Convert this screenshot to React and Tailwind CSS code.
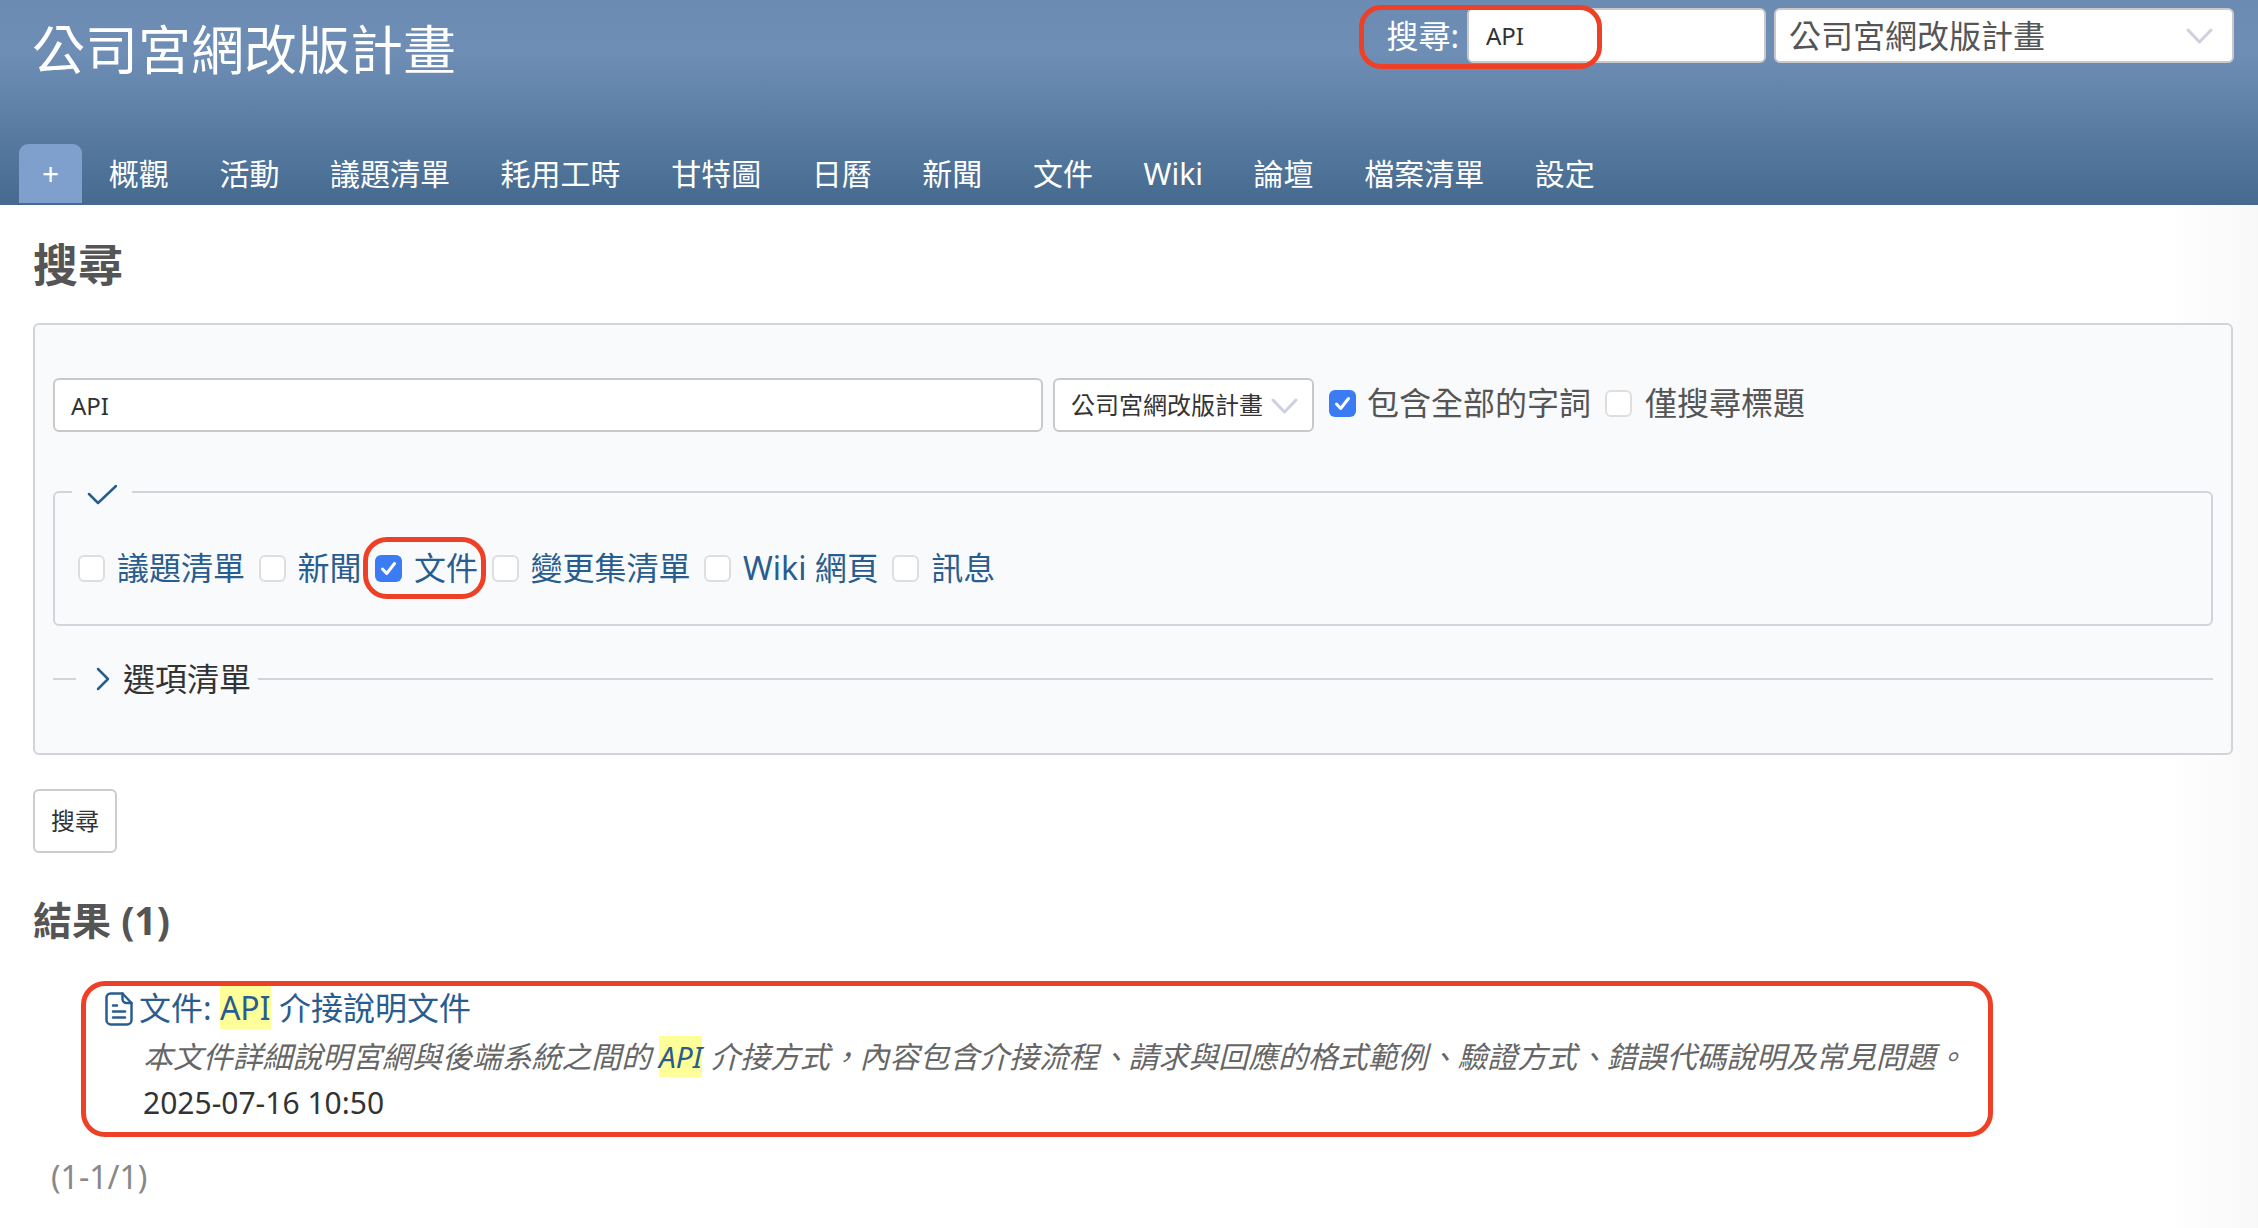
const NAV = ['概觀', '活動', '議題清單', '耗用工時', '甘特圖', '日曆', '新聞', '文件', 'Wiki', '論壇', '檔案清單', '設定']

const TRACKERS = [
  { label: '議題清單' },
  { label: '新聞' },
  { label: '文件', checked: true, marked: true },
  { label: '變更集清單' },
  { label: 'Wiki 網頁' },
  { label: '訊息' },
]

function Checkbox({ checked }) {
  if (checked) {
    return (
      <span className="flex h-[27px] w-[27px] shrink-0 items-center justify-center rounded-[6px] bg-[#3b7cf4]">
        <svg width="21" height="21" viewBox="0 0 21 21" fill="none" stroke="#fff" strokeWidth="3" strokeLinecap="round" strokeLinejoin="round">
          <path d="M4.5 11l4.2 4.5 7.8-10" />
        </svg>
      </span>
    )
  }
  return <span className="h-[27px] w-[27px] shrink-0 rounded-[6px] border-2 border-[#dedede] bg-white" />
}

function Chevron({ className }) {
  return (
    <svg className={className} width="27" height="16" viewBox="0 0 27 16" fill="none" stroke="#cfcfe2" strokeWidth="3" strokeLinecap="round" strokeLinejoin="round">
      <path d="M2 2l11.500 12L25 2" />
    </svg>
  )
}

function DocIcon() {
  return (
    <svg className="mr-[6px] shrink-0" width="28" height="34" viewBox="0 0 28 34" fill="none" stroke="#2a5d8f" strokeWidth="2.500" strokeLinecap="round" strokeLinejoin="round">
      <path d="M5.500 1.500H17.500L26.500 11V28A4.500 4.500 0 0 1 22 32.500H6A4.500 4.500 0 0 1 1.500 28V5.500A4 4 0 0 1 5.500 1.500Z" />
      <path d="M17.500 1.500V7A4 4 0 0 0 21.500 11H26.500" />
      <path d="M8 13.500H12M8 19.500H20M8 25.500H20" />
    </svg>
  )
}

export default function App() {
  return (
    <div className="min-h-screen bg-[linear-gradient(to_right,#ffffff_96%,#f8f8f8)] font-['Noto_Sans','Noto_Sans_CJK_TC',sans-serif] text-[#333333]">
      {/* Header */}
      <header className="h-[205px] bg-[linear-gradient(#6b8bb3_0%,#6e8eb6_25%,#466a8f_100%)]">
        <div className="flex h-[144px] items-start justify-between pl-[32px] pr-[24px]">
          <h1 className="mt-[14px] text-[53px] leading-[72px] font-normal text-white">公司宮網改版計畫</h1>
          <div className="mt-[8px] flex items-center">
            <span className="mr-[8px] text-[32px] leading-[55px] text-white">搜尋:</span>
            <div className="relative">
              <input
                readOnly
                value="API"
                className="h-[55px] w-[299px] rounded-[6px] border-2 border-[#c9c9c9] bg-white pl-[17px] text-[24px] text-[#333333] outline-none"
              />
              <div className="absolute top-[-3px] left-[-108px] h-[64px] w-[243px] rounded-[22px] border-[5px] border-[#ee4026]" />
            </div>
            <div className="relative ml-[8px] flex h-[55px] w-[460px] items-center rounded-[6px] border-2 border-[#c9c9c9] bg-white pl-[13px] text-[32px] text-[#555555]">
              公司宮網改版計畫
              <Chevron className="absolute top-[18px] right-[19px]" />
            </div>
          </div>
        </div>
        <nav className="flex items-end pl-[19px]">
          <span className="mr-[1.500px] flex h-[59px] w-[63px] items-center justify-center rounded-t-[9px] bg-[#7f9fcd] text-[30px] text-white">+</span>
          {NAV.map((item) => (
            <span key={item} className="flex h-[59px] items-center px-[25.300px] text-[30px] text-white">
              {item}
            </span>
          ))}
        </nav>
      </header>

      <main className="pt-[30px] pr-[25px] pl-[33px]">
        <h2 className="text-[45px] leading-[60px] font-bold text-[#555555]">搜尋</h2>

        {/* Search form */}
        <section className="mt-[28px] h-[432px] rounded-[6px] border-2 border-[#d1d5db] bg-[#f9fafc] px-[18px] pt-[53px]">
          <div className="flex h-[54px] items-center">
            <input
              readOnly
              value="API"
              className="h-[54px] w-[990px] rounded-[6px] border-2 border-[#c9c9c9] bg-white pl-[16px] text-[24px] text-[#333333] outline-none"
            />
            <div className="relative ml-[10px] flex h-[54px] w-[261px] items-center rounded-[6px] border-2 border-[#c9c9c9] bg-white pl-[16px] text-[24px] text-[#333333]">
              公司宮網改版計畫
              <Chevron className="absolute top-[18px] right-[14px]" />
            </div>
            <div className="-mt-[4px] ml-[15px] flex items-center text-[32px] text-[#555555]">
              <Checkbox checked />
              <span className="mr-[14px] ml-[11px]">包含全部的字詞</span>
              <Checkbox />
              <span className="ml-[13px]">僅搜尋標題</span>
            </div>
          </div>

          {/* Trackers */}
          <div className="relative mt-[59px] flex h-[135px] items-center gap-[13.500px] rounded-[6px] border-2 border-[#d1d5db] pt-[19px] pl-[23px] text-[32px] text-[#2a5d8f]">
            <span className="absolute -top-[9px] left-[17px] flex h-[20px] w-[60px] items-center justify-center bg-[#f9fafc]">
              <svg width="30" height="21" viewBox="0 0 30 21" fill="none" stroke="#2a5d8f" strokeWidth="2.500" strokeLinecap="round" strokeLinejoin="round">
                <path d="M2 10l9 9L29 2" />
              </svg>
            </span>
            {TRACKERS.map((t) => (
              <div key={t.label} className="relative flex items-center gap-[12px]">
                <Checkbox checked={t.checked} />
                <span>{t.label}</span>
                {t.marked && (
                  <div className="absolute top-1/2 left-[-12px] h-[62px] w-[123px] -translate-y-1/2 rounded-[24px] border-[5px] border-[#ee4026]" />
                )}
              </div>
            ))}
          </div>

          {/* Options */}
          <div className="mt-[30px] flex h-[46px] items-center">
            <span className="h-[2px] w-[23px] bg-[#d1d5db]" />
            <svg className="ml-[20px]" width="14" height="24" viewBox="0 0 14 24" fill="none" stroke="#2a5d8f" strokeWidth="2.500" strokeLinecap="round" strokeLinejoin="round">
              <path d="M2 2l10 10L2 22" />
            </svg>
            <span className="ml-[13px] text-[32px] text-[#333333]">選項清單</span>
            <span className="ml-[7px] h-[2px] flex-1 bg-[#d1d5db]" />
          </div>
        </section>

        <button className="mt-[34px] flex h-[64px] w-[84px] items-center justify-center rounded-[6px] border-2 border-[#cccccc] bg-white text-[24px] text-[#333333]">
          搜尋
        </button>

        <h3 className="mt-[43px] text-[39px] leading-[48px] font-bold text-[#555555]">結果 (1)</h3>

        {/* Results */}
        <div className="mt-[37px] ml-[48px] h-[156px] w-[1912px] rounded-[24px] border-[5px] border-[#ee4026] pl-[19px]">
          <div className="flex h-[46px] items-center text-[32px] text-[#2a5d8f]">
            <DocIcon />
            <span className="-mt-[2px]">
              文件: <span className="bg-[#ffff99]">API</span> 介接說明文件
            </span>
          </div>
          <p className="mt-[2px] pl-[38px] text-[29.900px] leading-[46px] text-[#666666] italic">
            本文件詳細說明宮網與後端系統之間的 <span className="bg-[#ffff99] text-[#2a5d8f]">API</span> 介接方式，內容包含介接流程、請求與回應的格式範例、驗證方式、錯誤代碼說明及常見問題。
          </p>
          <p className="pl-[38px] text-[30px] leading-[46px] text-[#333333]">2025-07-16 10:50</p>
        </div>

        <p className="mt-[17px] pl-[18px] text-[32px] leading-[46px] text-[#888888]">(1-1/1)</p>
      </main>
    </div>
  )
}
